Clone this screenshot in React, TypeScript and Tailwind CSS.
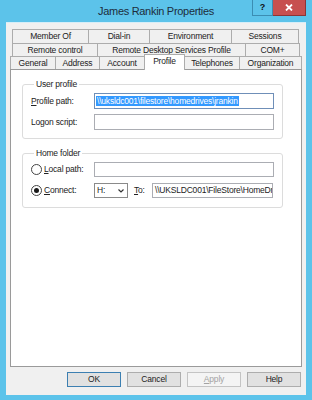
import React from 'react';
import clsx from 'clsx';

// narrow face, the screenshot is squeezed horizontally
const FONT = "font-['Liberation_Sans_Narrow','Liberation_Sans',Arial,sans-serif]";

interface TabDef {
  label: string;
  w: string;
  selected?: boolean;
}

const row1: TabDef[] = [
  { label: 'Member Of', w: 'w-[77px]' },
  { label: 'Dial-in', w: 'w-[62px]' },
  { label: 'Environment', w: 'w-[83px]' },
  { label: 'Sessions', w: 'w-[68px]' },
];

const row2: TabDef[] = [
  { label: 'Remote control', w: 'w-[86px]' },
  { label: 'Remote Desktop Services Profile', w: 'w-[149px]' },
  { label: 'COM+', w: 'w-[55px]' },
];

const row3: TabDef[] = [
  { label: 'General', w: 'w-[46px]' },
  { label: 'Address', w: 'w-[45px]' },
  { label: 'Account', w: 'w-[46px]' },
  { label: 'Profile', w: 'w-[41px]', selected: true },
  { label: 'Telephones', w: 'w-[56px]' },
  { label: 'Organization', w: 'w-[63px]' },
];

const Tab: React.FC<{ tab: TabDef }> = ({ tab }) => (
  <div
    className={clsx(
      'flex shrink-0 items-center justify-center border border-b-0 border-[#acacac] -ml-px first:ml-0 text-[8.5px] leading-none tracking-[-0.2px] text-[#222]',
      tab.w,
      tab.selected ? 'relative z-10 -mt-[2px] h-[16px] bg-white pb-[2px]' : 'h-full bg-[#f0f0f0]'
    )}
  >
    {tab.label}
  </div>
);

const TextBox: React.FC<{ w: string; focused?: boolean; children?: React.ReactNode; h?: string }> = ({
  w,
  focused,
  children,
  h = 'h-[15px]',
}) => (
  <div
    className={clsx(
      'flex items-center overflow-hidden whitespace-nowrap border bg-white px-[1px] leading-none',
      w,
      h,
      focused ? 'border-[#6f8fb8]' : 'border-[#abadb3]'
    )}
  >
    {children}
  </div>
);

const Radio: React.FC<{ checked?: boolean }> = ({ checked }) => (
  <div className="flex h-[11px] w-[11px] shrink-0 items-center justify-center rounded-full border border-[#444] bg-white">
    {checked && <div className="h-[5px] w-[5px] rounded-full bg-[#1a1a1a]" />}
  </div>
);

const DlgButton: React.FC<{ label: React.ReactNode; primary?: boolean; disabled?: boolean }> = ({
  label,
  primary,
  disabled,
}) => (
  <div
    className={clsx(
      'flex h-[15px] w-[54px] items-center justify-center border text-[8.5px] leading-none tracking-[-0.2px]',
      disabled
        ? 'border-[#c4c4c4] bg-[#f4f4f4] text-[#a3a3a3]'
        : primary
          ? 'border-[#3c7fb1] bg-[#e1e1e1] text-[#222]'
          : 'border-[#adadad] bg-[#e1e1e1] text-[#222]'
    )}
  >
    {label}
  </div>
);

export default function App() {
  return (
    <div className={clsx('flex h-[400px] w-[312px] flex-col bg-[#5cc3ea]', FONT)}>
      {/* title bar */}
      <div className="flex h-[22px] shrink-0">
        <div className="w-[60px]" />
        <div className="flex flex-1 items-center justify-center pt-[1px] text-[11px] leading-none tracking-[-0.3px] text-[#1d2d3c]">
          James Rankin Properties
        </div>
        <div className="flex w-[60px] items-start">
          <div className="flex h-[16px] w-[21px] items-center justify-center border border-t-0 border-[#3b8db3] bg-[#5cc3ea] text-[9px] font-bold leading-none text-[#111]">
            ?
          </div>
          <div className="flex h-[16px] w-[33px] items-center justify-center border-b border-r border-[#8c3535] bg-[#c7504f]">
            <svg width="8" height="7" viewBox="0 0 8 7">
              <path d="M1 0.5 L7 6.5 M7 0.5 L1 6.5" stroke="white" strokeWidth="1.8" />
            </svg>
          </div>
        </div>
      </div>

      {/* client area */}
      <div className="mx-[6px] mb-[5px] flex flex-1 flex-col border-t border-[#d6eef8] bg-[#f0f0f0]">
        <div className="mt-[6px] flex flex-col">
          <div className="ml-[6px] flex h-[14px]">
            {row1.map((t) => (
              <Tab key={t.label} tab={t} />
            ))}
          </div>
          <div className="ml-[6px] flex h-[13px]">
            {row2.map((t) => (
              <Tab key={t.label} tab={t} />
            ))}
          </div>
          <div className="ml-[4px] flex h-[13px] items-start">
            {row3.map((t) => (
              <Tab key={t.label} tab={t} />
            ))}
          </div>

          {/* tab page */}
          <div className="ml-[4px] h-[298px] w-[292px] border border-[#9a9a9a] bg-white pt-[8px] text-[8.5px] tracking-[-0.2px] text-[#222]">
            <fieldset className="ml-[11px] w-[261px] rounded-[3px] border border-[#dcdcdc] px-[8px] pb-[8px]">
              <legend className="ml-[3px] px-[2px] leading-[12px]">User profile</legend>
              <div className="mt-[3px] flex h-[16px] items-center justify-between">
                <span>
                  <span className="underline">P</span>rofile path:
                </span>
                <TextBox w="w-[180px]" h="h-[16px]" focused>
                  <span className="bg-[#3399ff] px-[1px] py-[1px] text-white">
                    \\uksldc001\filestore\homedrives\jrankin
                  </span>
                </TextBox>
              </div>
              <div className="mt-[5px] flex h-[16px] items-center justify-between">
                <span>Logon script:</span>
                <TextBox w="w-[180px]" h="h-[16px]" />
              </div>
            </fieldset>

            <fieldset className="ml-[11px] mt-[8px] w-[261px] rounded-[3px] border border-[#dcdcdc] px-[8px] pb-[9px]">
              <legend className="ml-[3px] px-[2px] leading-[12px]">Home folder</legend>
              <div className="mt-[3px] flex h-[15px] items-center justify-between">
                <div className="flex items-center gap-[2px]">
                  <Radio />
                  <span>
                    <span className="underline">L</span>ocal path:
                  </span>
                </div>
                <TextBox w="w-[180px]" />
              </div>
              <div className="mt-[6px] flex h-[15px] items-center">
                <div className="flex w-[63px] items-center gap-[2px]">
                  <Radio checked />
                  <span>
                    <span className="underline">C</span>onnect:
                  </span>
                </div>
                <div className="flex h-[15px] w-[34px] items-center justify-between border border-[#8a8a8a] bg-white pl-[2px] pr-[3px] leading-none">
                  <span>H:</span>
                  <svg width="6" height="4" viewBox="0 0 6 4">
                    <path d="M0.5 0.5 L3 3 L5.5 0.5" stroke="#333" strokeWidth="1.2" fill="none" />
                  </svg>
                </div>
                <span className="ml-[6px] w-[18px]">
                  <span className="underline">T</span>o:
                </span>
                <TextBox w="w-[121px]">
                  <span className="pl-[1px]">\\UKSLDC001\FileStore\HomeDr</span>
                </TextBox>
              </div>
            </fieldset>
          </div>

          {/* dialog buttons */}
          <div className="mt-[5px] flex justify-end gap-[6px] pr-[5px]">
            <DlgButton label="OK" primary />
            <DlgButton label="Cancel" />
            <DlgButton
              label={
                <span>
                  <span className="underline">A</span>pply
                </span>
              }
              disabled
            />
            <DlgButton label="Help" />
          </div>
        </div>
      </div>
    </div>
  );
}
